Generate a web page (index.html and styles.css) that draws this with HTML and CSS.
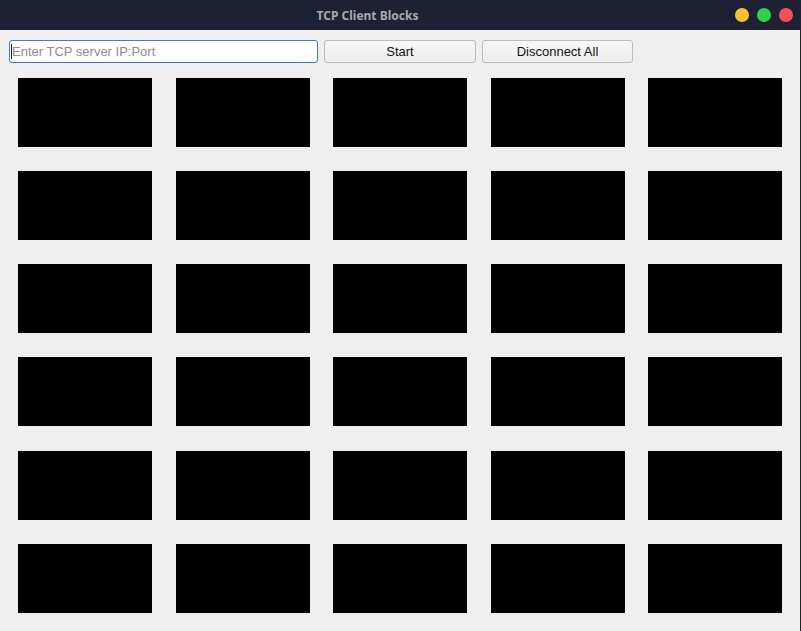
FILE: index.html
```html
<!DOCTYPE html>
<html>
<head>
<meta charset="utf-8">
<title>TCP Client Blocks</title>
<link rel="stylesheet" href="styles.css">
</head>
<body>
<div class="window">
  <div class="titlebar">
    <span class="title">TCP Client Blocks</span>
    <div class="lights">
      <span class="light yellow"></span>
      <span class="light green"></span>
      <span class="light red"></span>
    </div>
  </div>
  <div class="app">
    <div class="toolbar">
      <div class="field">
        <input class="ip" type="text" placeholder="Enter TCP server IP:Port">
        <span class="caret"></span>
      </div>
      <button class="btn btn-start">Start</button>
      <button class="btn btn-disc">Disconnect All</button>
    </div>
    <div class="grid">
      <div class="block"></div><div class="block"></div><div class="block"></div><div class="block"></div><div class="block"></div>
      <div class="block"></div><div class="block"></div><div class="block"></div><div class="block"></div><div class="block"></div>
      <div class="block"></div><div class="block"></div><div class="block"></div><div class="block"></div><div class="block"></div>
      <div class="block"></div><div class="block"></div><div class="block"></div><div class="block"></div><div class="block"></div>
      <div class="block"></div><div class="block"></div><div class="block"></div><div class="block"></div><div class="block"></div>
      <div class="block"></div><div class="block"></div><div class="block"></div><div class="block"></div><div class="block"></div>
    </div>
  </div>
</div>
</body>
</html>
```
FILE: styles.css
```css
html, body {
  margin: 0;
  padding: 0;
  background: #efefef;
}
.window {
  width: 801px;
  height: 631px;
  display: flex;
  flex-direction: column;
  overflow: hidden;
}
.titlebar {
  height: 30px;
  flex: none;
  background: #1e2133;
  position: relative;
  display: flex;
  align-items: center;
  justify-content: center;
}
.title {
  font-family: "Noto Sans", "Open Sans", sans-serif;
  font-weight: bold;
  font-size: 12px;
  color: #a7a9b1;
  margin-left: -66px;
}
.lights {
  position: absolute;
  right: 8px;
  top: 8px;
  display: flex;
  gap: 8px;
}
.light {
  width: 14px;
  height: 14px;
  border-radius: 50%;
  display: block;
}
.yellow { background: #fdc130; }
.green { background: #2ed24b; }
.red { background: #f1505a; }
.app {
  flex: 1;
  background: #efefef;
  border-right: 1px solid #1e2133;
  display: flex;
  flex-direction: column;
}
.toolbar {
  display: flex;
  gap: 6px;
  padding: 10px 0 0 9px;
}
.field {
  position: relative;
  width: 309px;
  height: 23px;
}
.ip {
  box-sizing: border-box;
  width: 309px;
  height: 23px;
  margin: 0;
  border: 1px solid #3b7ec6;
  border-radius: 3px;
  background: #ffffff;
  padding: 0 0 0 2px;
  font-family: "Liberation Sans", Arial, sans-serif;
  font-size: 13px;
  color: #202020;
  outline: none;
}
.ip::placeholder {
  color: #8d8d8d;
}
.caret {
  position: absolute;
  left: 2px;
  top: 4px;
  width: 1px;
  height: 15px;
  background: #1a1a1a;
}
.btn {
  box-sizing: border-box;
  height: 23px;
  margin: 0;
  padding: 0;
  border: 1px solid #bcbcbc;
  border-radius: 3px;
  background: linear-gradient(#f8f8f8, #ececec);
  font-family: "Liberation Sans", Arial, sans-serif;
  font-size: 13px;
  color: #111111;
}
.btn-start { width: 152px; }
.btn-disc { width: 151px; }
.grid {
  display: grid;
  grid-template-columns: repeat(5, 134px);
  grid-template-rows: repeat(6, 69px);
  column-gap: 23.5px;
  row-gap: 24.15px;
  padding: 15px 0 0 18px;
}
.block {
  background: #000000;
}
```
